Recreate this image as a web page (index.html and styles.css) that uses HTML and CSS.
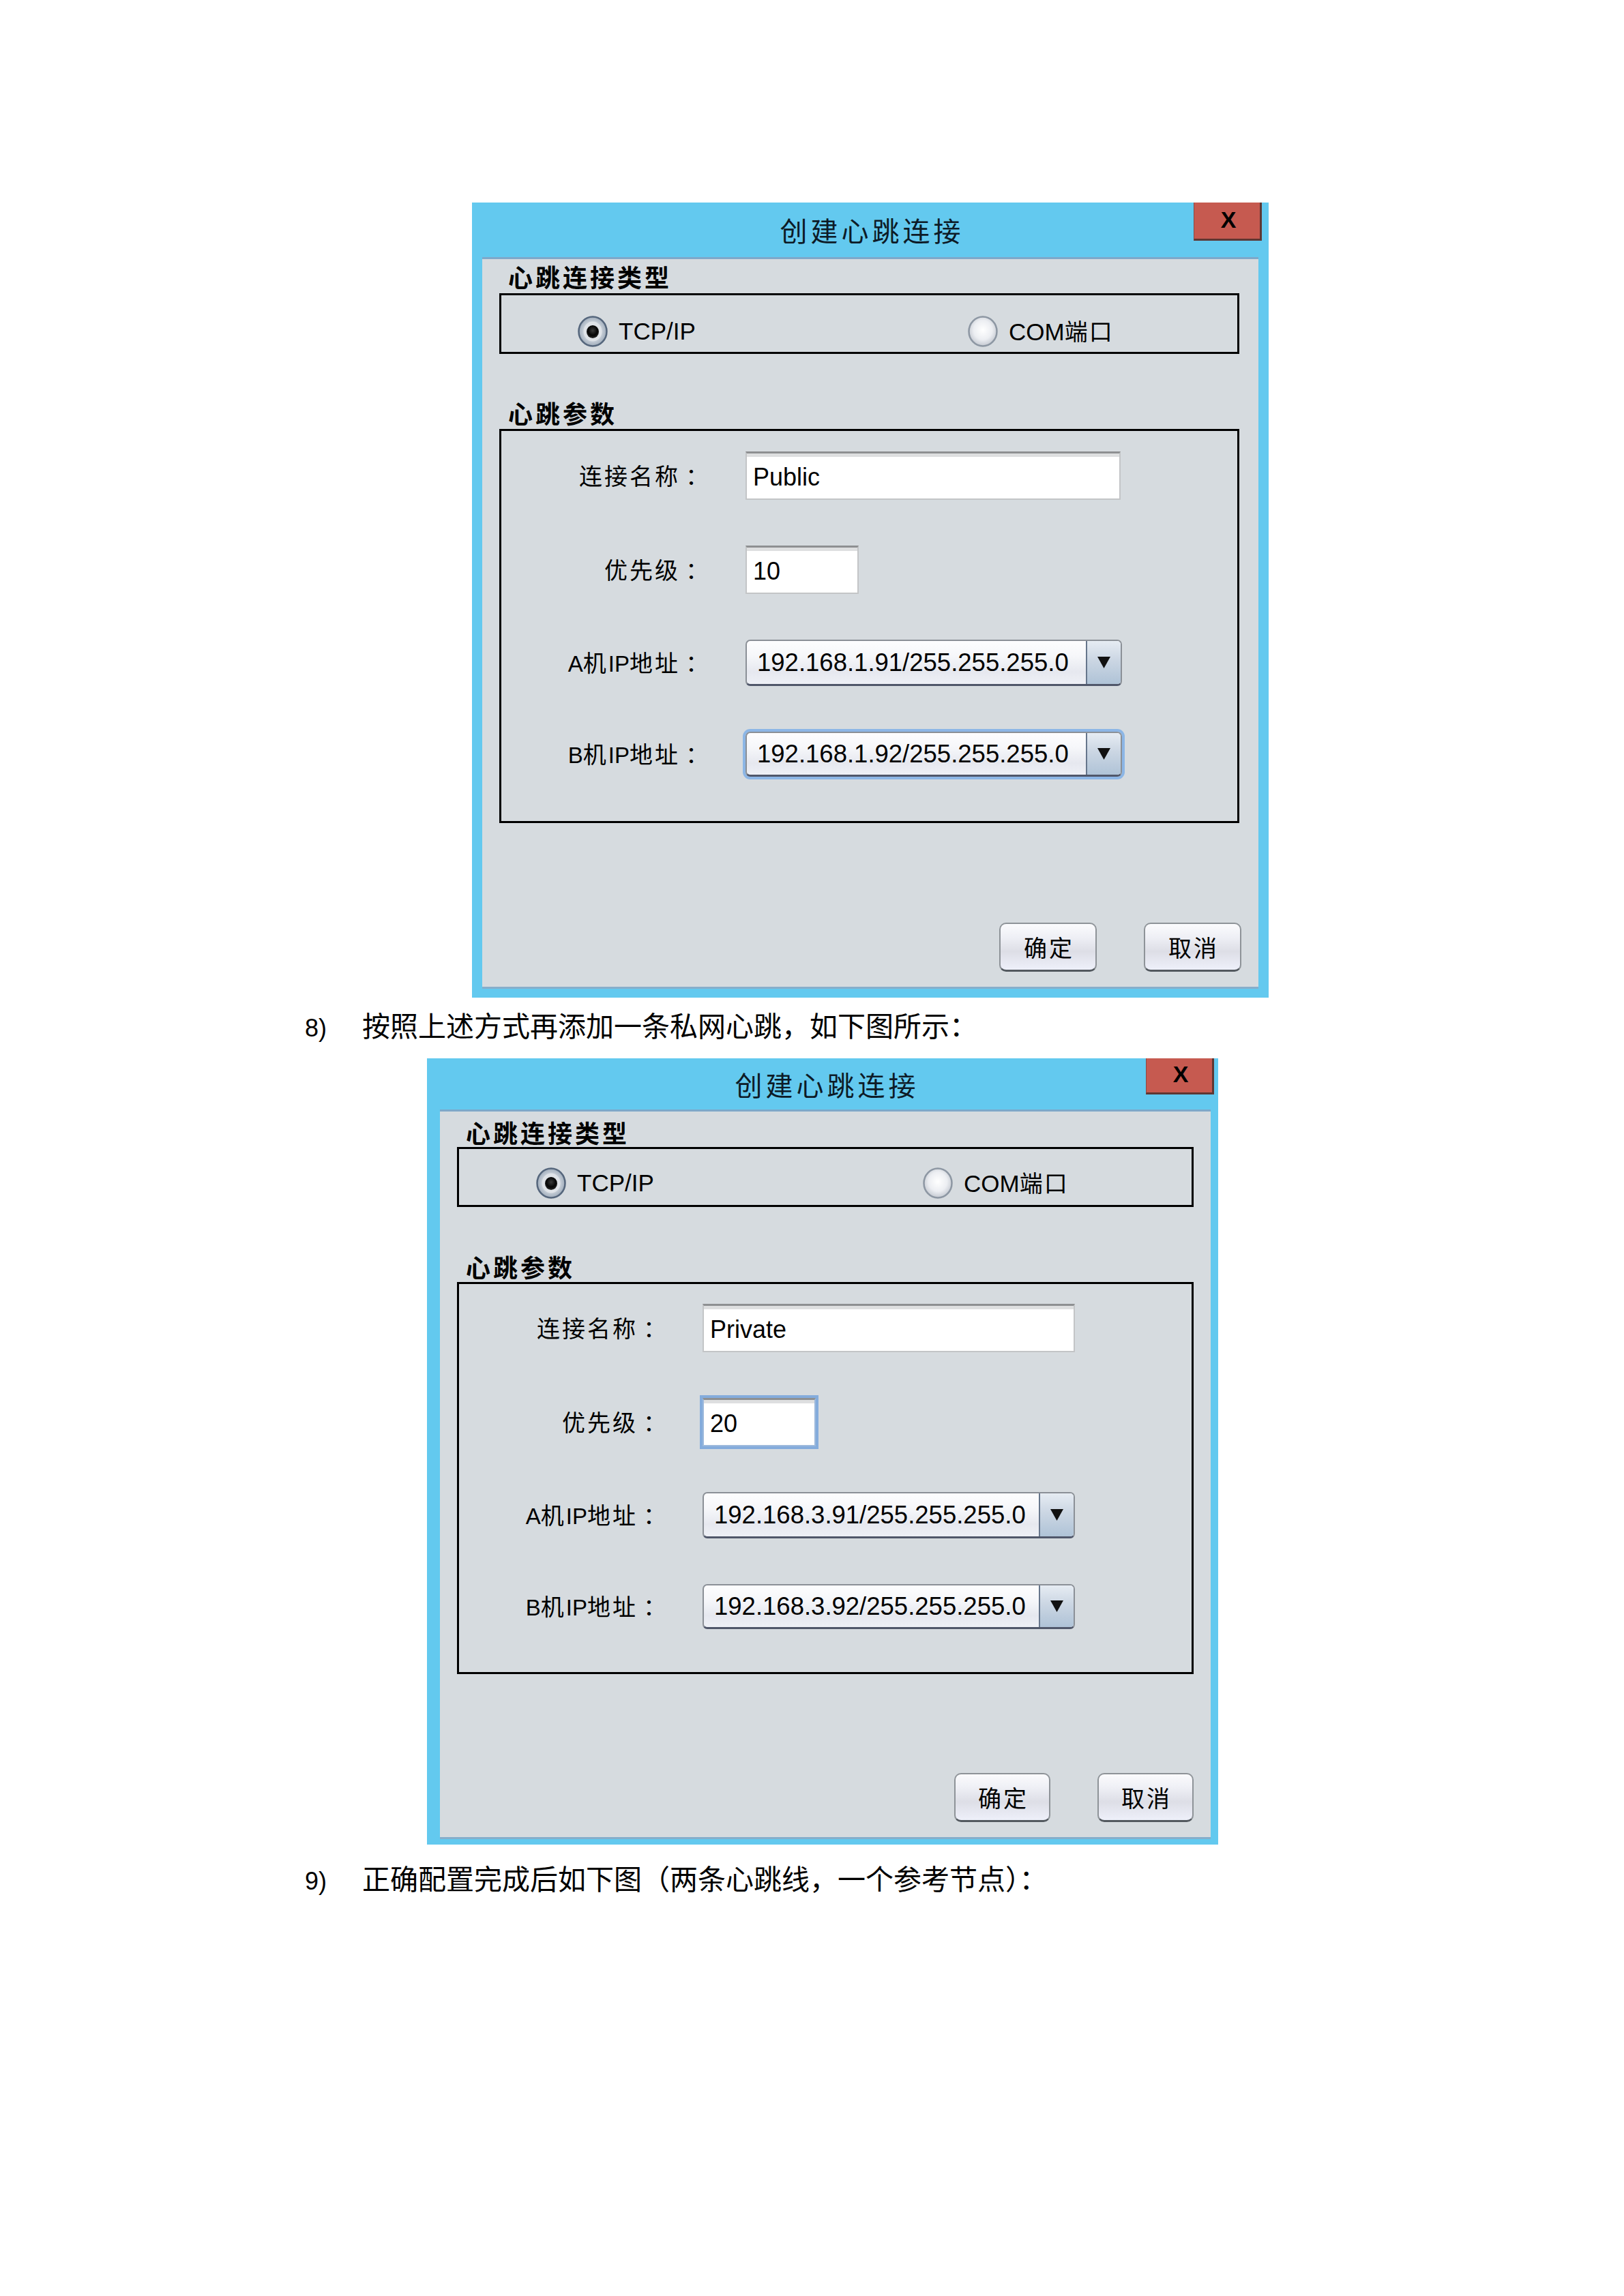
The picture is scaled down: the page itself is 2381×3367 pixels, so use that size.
FILE: index.html
```html
<!DOCTYPE html>
<html lang="zh-CN">
<head>
<meta charset="utf-8">
<title>创建心跳连接</title>
<link rel="stylesheet" href="styles.css">
</head>
<body>
<svg class="defs" aria-hidden="true" width="0" height="0">
  <defs>
    <radialGradient id="rbg-on" cx="50%" cy="50%" r="50%">
      <stop offset="0%" stop-color="#eef1f4"/>
      <stop offset="55%" stop-color="#d3d9e0"/>
      <stop offset="100%" stop-color="#9eabba"/>
    </radialGradient>
    <radialGradient id="rbg-off" cx="50%" cy="45%" r="55%">
      <stop offset="0%" stop-color="#ffffff"/>
      <stop offset="60%" stop-color="#eceef2"/>
      <stop offset="100%" stop-color="#c3c8d0"/>
    </radialGradient>
    <radialGradient id="rdot" cx="50%" cy="40%" r="55%">
      <stop offset="0%" stop-color="#3a3a3a"/>
      <stop offset="70%" stop-color="#050505"/>
      <stop offset="100%" stop-color="#222"/>
    </radialGradient>
  </defs>
</svg>
<main class="page">

  <section class="dlg dlg-1">
    <header class="dlg-title">
      <h1 class="dlg-title-text">创建心跳连接</h1>
      <span class="dlg-close">X</span>
    </header>
    <div class="dlg-body">
      <div class="grp-label grp-label-1">心跳连接类型</div>
      <div class="grp grp-type">
        <div class="radio">
          <svg class="radio-ico" viewBox="0 0 44 46"><ellipse cx="22" cy="23" rx="20.5" ry="21.5" fill="url(#rbg-on)" stroke="#55667c" stroke-width="2.5"/><ellipse cx="22" cy="23" rx="13.5" ry="14.5" fill="#dfe3e8"/><ellipse cx="22" cy="23.5" rx="9" ry="9.5" fill="url(#rdot)"/></svg>
          <span>TCP/IP</span>
        </div>
        <div class="radio">
          <svg class="radio-ico" viewBox="0 0 44 46"><ellipse cx="22" cy="23" rx="20.5" ry="21.5" fill="url(#rbg-off)" stroke="#8d97a3" stroke-width="2.5"/></svg>
          <span>COM<span class="cjk">端口</span></span>
        </div>
      </div>
      <div class="grp-label grp-label-2">心跳参数</div>
      <div class="grp grp-params">
        <div class="row">
          <span class="lbl">连接名称<span class="colon">：</span></span>
          <div class="field field-wide">Public</div>
        </div>
        <div class="row">
          <span class="lbl">优先级<span class="colon">：</span></span>
          <div class="field field-short">10</div>
        </div>
        <div class="row">
          <span class="lbl"><span class="lat">A</span>机<span class="lat">IP</span>地址<span class="colon">：</span></span>
          <div class="combo">
            <span class="combo-text">192.168.1.91/255.255.255.0</span>
            <span class="combo-arrow"><svg viewBox="0 0 22 20" class="arrow-ico"><path d="M1 1H21L11 19Z" fill="#111"/></svg></span>
          </div>
        </div>
        <div class="row">
          <span class="lbl"><span class="lat">B</span>机<span class="lat">IP</span>地址<span class="colon">：</span></span>
          <div class="combo combo-b focus">
            <span class="combo-text">192.168.1.92/255.255.255.0</span>
            <span class="combo-arrow"><svg viewBox="0 0 22 20" class="arrow-ico"><path d="M1 1H21L11 19Z" fill="#111"/></svg></span>
          </div>
        </div>
      </div>
      <div class="actions">
        <span class="btn">确定</span>
        <span class="btn">取消</span>
      </div>
    </div>
  </section>

  <p class="step step-8"><span class="num">8)</span>按照上述方式再添加一条私网心跳，如下图所示：</p>

  <section class="dlg dlg-2">
    <header class="dlg-title">
      <h1 class="dlg-title-text">创建心跳连接</h1>
      <span class="dlg-close">X</span>
    </header>
    <div class="dlg-body">
      <div class="grp-label grp-label-1">心跳连接类型</div>
      <div class="grp grp-type">
        <div class="radio">
          <svg class="radio-ico" viewBox="0 0 44 46"><ellipse cx="22" cy="23" rx="20.5" ry="21.5" fill="url(#rbg-on)" stroke="#55667c" stroke-width="2.5"/><ellipse cx="22" cy="23" rx="13.5" ry="14.5" fill="#dfe3e8"/><ellipse cx="22" cy="23.5" rx="9" ry="9.5" fill="url(#rdot)"/></svg>
          <span>TCP/IP</span>
        </div>
        <div class="radio">
          <svg class="radio-ico" viewBox="0 0 44 46"><ellipse cx="22" cy="23" rx="20.5" ry="21.5" fill="url(#rbg-off)" stroke="#8d97a3" stroke-width="2.5"/></svg>
          <span>COM<span class="cjk">端口</span></span>
        </div>
      </div>
      <div class="grp-label grp-label-2">心跳参数</div>
      <div class="grp grp-params">
        <div class="row">
          <span class="lbl">连接名称<span class="colon">：</span></span>
          <div class="field field-wide">Private</div>
        </div>
        <div class="row">
          <span class="lbl">优先级<span class="colon">：</span></span>
          <div class="field field-short focus">20</div>
        </div>
        <div class="row">
          <span class="lbl"><span class="lat">A</span>机<span class="lat">IP</span>地址<span class="colon">：</span></span>
          <div class="combo">
            <span class="combo-text">192.168.3.91/255.255.255.0</span>
            <span class="combo-arrow"><svg viewBox="0 0 22 20" class="arrow-ico"><path d="M1 1H21L11 19Z" fill="#111"/></svg></span>
          </div>
        </div>
        <div class="row">
          <span class="lbl"><span class="lat">B</span>机<span class="lat">IP</span>地址<span class="colon">：</span></span>
          <div class="combo combo-b">
            <span class="combo-text">192.168.3.92/255.255.255.0</span>
            <span class="combo-arrow"><svg viewBox="0 0 22 20" class="arrow-ico"><path d="M1 1H21L11 19Z" fill="#111"/></svg></span>
          </div>
        </div>
      </div>
      <div class="actions">
        <span class="btn">确定</span>
        <span class="btn">取消</span>
      </div>
    </div>
  </section>

  <p class="step step-9"><span class="num">9)</span>正确配置完成后如下图（两条心跳线，一个参考节点）：</p>

</main>
</body>
</html>
```

FILE: styles.css
```css
* { box-sizing: border-box; }

html, body {
  margin: 0;
  padding: 0;
  background: #ffffff;
}

body {
  font-family: "Liberation Sans", "Noto Sans CJK SC", sans-serif;
  color: #000;
}

.defs {
  position: absolute;
  width: 0;
  height: 0;
  overflow: hidden;
}

.page {
  width: 2381px;
  min-height: 3367px;
  padding-top: 297px;
}

/* ---------- dialog frame ---------- */
.dlg {
  position: relative;
  display: flex;
  flex-direction: column;
  background: #63c9ef;
}

.dlg-1 {
  margin-left: 692px;
  width: 1168px;
  height: 1166px;
  padding: 0 15px 13px 15px;
}

.dlg-2 {
  margin-left: 626px;
  margin-top: 20px;
  width: 1160px;
  height: 1153px;
  padding: 0 11px 8px 19px;
}

.dlg-title {
  flex: none;
  display: flex;
  align-items: center;
  justify-content: center;
}

.dlg-1 .dlg-title { height: 80px; }
.dlg-2 .dlg-title { height: 75px; }

.dlg-title-text {
  margin: 0;
  font-family: "Noto Sans CJK SC", sans-serif;
  font-weight: 400;
  font-size: 40px;
  line-height: 1;
  letter-spacing: 5px;
  padding-left: 5px;
  color: #0d1b27;
}

.dlg-close {
  position: absolute;
  top: 0;
  width: 100px;
  background: #c65a50;
  border-left: 1px solid #8a4a44;
  border-right: 3px solid #5e3733;
  border-bottom: 3px solid #5e3733;
  font-family: "Liberation Sans", sans-serif;
  font-weight: 700;
  font-size: 34px;
  line-height: 34px;
  text-align: center;
  padding-left: 4px;
  color: #000;
}

.dlg-1 .dlg-close { left: 1058px; height: 56px; padding-top: 8px; }
.dlg-2 .dlg-close { left: 1054px; height: 53px; padding-top: 6px; }

/* ---------- dialog body ---------- */
.dlg-body {
  flex: 1;
  display: flex;
  flex-direction: column;
  background: #d6dbdf;
  border-top: 3px solid #7ea8c9;
  border-bottom: 3px solid #86aecb;
}

.dlg-1 .dlg-body { padding-top: 3px; }
.dlg-2 .dlg-body { padding-top: 8px; }

.grp-label {
  height: 44px;
  padding-left: 38px;
  font-family: "Noto Sans CJK SC", sans-serif;
  font-weight: 700;
  font-size: 36px;
  line-height: 44px;
  letter-spacing: 4px;
}

.dlg-1 .grp-label-1 { margin-bottom: 3px; }
.dlg-1 .grp-label-2 { margin-top: 64px; margin-bottom: 2px; }
.dlg-2 .grp-label-2 { margin-top: 65px; margin-bottom: 1px; }

.grp {
  border: 3px solid #000;
  margin-left: 25px;
}

.dlg-1 .grp { width: 1085px; }
.dlg-2 .grp { width: 1080px; }

/* radio group */
.grp-type {
  display: grid;
  grid-template-columns: 572px auto;
  align-content: start;
  padding-left: 112px;
}

.dlg-1 .grp-type { height: 89px; padding-top: 30px; }
.dlg-2 .grp-type {
  height: 88px;
  padding-top: 27px;
  padding-left: 113px;
  grid-template-columns: 567px auto;
}

.radio {
  display: flex;
  align-items: center;
  gap: 16px;
  height: 46px;
  font-size: 35px;
  line-height: 40px;
}

.radio-ico {
  width: 44px;
  height: 46px;
  flex: none;
}

.cjk {
  font-family: "Noto Sans CJK SC", sans-serif;
  font-size: 34px;
  letter-spacing: 2px;
}

/* parameter group */
.grp-params {
  display: flex;
  flex-direction: column;
  gap: 67px;
}

.dlg-1 .grp-params { height: 578px; padding-top: 30px; }
.dlg-2 .grp-params { height: 575px; padding-top: 29px; }

.row {
  display: grid;
  grid-template-columns: 304px auto;
  column-gap: 54px;
  align-items: center;
}

.dlg-2 .row { column-gap: 53px; }

.lbl {
  text-align: right;
  font-size: 34px;
  line-height: 40px;
  letter-spacing: 3px;
  white-space: nowrap;
}

.lat {
  letter-spacing: 0;
  font-size: 33px;
}

.colon {
  font-family: "Noto Sans CJK TC", sans-serif;
  letter-spacing: 0;
  padding-left: 8px;
}

.field {
  height: 71px;
  display: flex;
  align-items: center;
  padding: 3px 0 0 9px;
  background: #ffffff;
  border: 2px solid #c3c5c7;
  border-top: 3px solid #8e9092;
  box-shadow: inset 0 5px 0 #dedfe0;
  font-size: 36px;
  line-height: 40px;
}

.dlg-1 .field-wide { width: 550px; }
.dlg-2 .field-wide { width: 546px; }
.field-short { width: 166px; }

.field.focus {
  border-left-color: #9db9dc;
  border-right-color: #9db9dc;
  border-bottom-color: #9db9dc;
  box-shadow: inset 0 5px 0 #dedfe0, 0 0 0 4px #84acdc;
}

.combo {
  display: flex;
  height: 68px;
  border: 2px solid #8b9097;
  border-bottom: 3px solid #50576a;
  border-radius: 7px;
  overflow: hidden;
  background: linear-gradient(180deg, #fdfdfe 0%, #f6f7fa 35%, #e6e8ef 72%, #eef0f6 100%);
}

.combo-b { height: 66px; }

.dlg-1 .combo { width: 552px; }
.dlg-2 .combo { width: 546px; }

.combo.focus {
  box-shadow: 0 0 0 4px #8cb6e6;
}

.combo-text {
  flex: 1;
  display: flex;
  align-items: center;
  padding-left: 15px;
  font-size: 36.5px;
  line-height: 40px;
  white-space: nowrap;
}

.combo-arrow {
  flex: none;
  width: 51px;
  display: flex;
  align-items: center;
  justify-content: center;
  border-left: 2px solid #66768c;
  background: linear-gradient(180deg, #e6ecf3 0%, #cbd6e3 45%, #afc3d7 100%);
}

.arrow-ico {
  width: 21px;
  height: 19px;
}

/* buttons */
.actions {
  margin-top: auto;
  display: flex;
  justify-content: flex-end;
  gap: 69px;
  padding: 0 25px 22px 0;
}

.btn {
  width: 143px;
  height: 72px;
  display: flex;
  align-items: center;
  justify-content: center;
  padding-left: 3px;
  border: 2px solid #8e9398;
  border-bottom: 3px solid #53595f;
  border-radius: 10px;
  background: linear-gradient(180deg, #fbfbfd 0%, #eeeff5 30%, #dddee6 60%, #eef0fa 100%);
  font-family: "Noto Sans CJK SC", sans-serif;
  font-size: 34px;
  line-height: 40px;
  letter-spacing: 3px;
}

.dlg-2 .btn { width: 141px; }

/* ---------- document text ---------- */
.step {
  margin: 0;
  height: 60px;
  padding-left: 447px;
  font-family: "Noto Sans CJK SC", sans-serif;
  font-size: 41px;
  line-height: 60px;
  white-space: nowrap;
}

.step-8 { margin-top: 9px; }
.step-9 { margin-top: 18px; }

.num {
  display: inline-block;
  width: 84px;
  font-family: "Liberation Sans", sans-serif;
  font-size: 36px;
  line-height: 40px;
}
```
